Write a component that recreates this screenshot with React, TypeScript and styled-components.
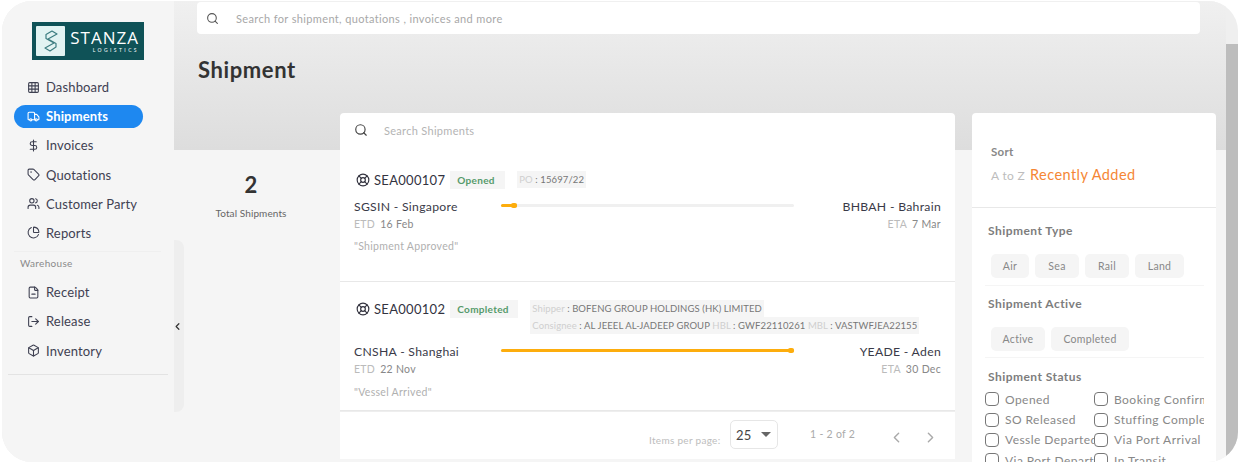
import React from "react";
import styled, { createGlobalStyle } from "styled-components";
import {
  Grid3x3, Truck, DollarSign, Tag, Users, PieChart, FileMinus, LogOut, Box,
  LifeBuoy, Search, ChevronLeft, ChevronRight,
} from "lucide-react";

const Global = createGlobalStyle`
  html, body { margin: 0; height: 462px; overflow: hidden; background: #fff; }
  body { font-family: "Lato", "Noto Sans", sans-serif; color: #3a3a48; letter-spacing: .3px; }
  * { box-sizing: border-box; }
`;

const Shell = styled.div`
  display: flex; position: relative; width: 1236px; height: 461px; margin: 1px 0 0 2px;
  border-radius: 30px; overflow: hidden; background: #efefef;
`;
const Sidebar = styled.aside`
  width: 172px; flex: none; background: #f5f5f5; display: flex; flex-direction: column; padding-top: 21px;
`;
const Logo = styled.div`
  width: 112px; height: 38px; margin-left: 30px; background: #0f5257; display: flex; align-items: center; padding-left: 4px; gap: 5px;
`;
const LogoMark = styled.div`
  width: 29px; height: 30px; flex: none; background: #e2f3f2; border-radius: 1px; display: flex; align-items: center; justify-content: center;
`;
const LogoText = styled.div`display: flex; flex-direction: column; align-items: flex-end; color: #fff; width: 69px;`;
const LogoName = styled.span`font-size: 17px; line-height: 18px; letter-spacing: 1px; font-family: "Open Sans", sans-serif;`;
const LogoSub = styled.span`font-size: 5px; line-height: 6px; letter-spacing: 2.4px;`;
const Nav = styled.nav`display: flex; flex-direction: column; margin-top: 12.5px;`;
const NavItem = styled.div<{ $active?: boolean }>`
  display: flex; align-items: center; gap: 6px; height: 23px; letter-spacing: .15px;
  margin: 3px 31px 3.2px 12px; padding-left: 13px; border-radius: 12px; font-size: 13px;
  background: ${p => (p.$active ? "#1e88f0" : "transparent")};
  color: ${p => (p.$active ? "#fff" : "#3f4152")};
  font-weight: ${p => (p.$active ? 700 : 400)};
  white-space: nowrap;
  svg { flex: none; }
`;
const FaintRule = styled.div`height: 1px; margin: 3px 13px 0 12px; background: #efefef;`;
const NavLabel = styled.div`font-size: 10px; color: #8a8a8a; margin: 5px 0 9px 18px; line-height: 12px;`;
const SideRule = styled.div`height: 1px; margin: 9px 6px 0; background: #e3e3e3;`;
const Collapse = styled.div`
  position: absolute; left: 172px; top: 239px; width: 10px; height: 172px; background: #eeeeee;
  border-radius: 0 8px 8px 0; display: flex; align-items: center;
  svg { margin-left: -2px; }
`;

const Main = styled.main`flex: 1; min-width: 0; background: #f5f5f5; display: flex; flex-direction: column; overflow: hidden;`;
const Banner = styled.header`
  height: 149px; flex: none; padding: 1px 0 0 23px; background: linear-gradient(180deg, #f0f0f0 0%, #dddddd 100%);
`;
const TopSearch = styled.div`
  width: 1003px; height: 32px; background: #fff; border-radius: 4px; display: flex; align-items: center; gap: 17px; padding-left: 9px;
  font-size: 11px; color: #a8a8a8; letter-spacing: .36px;
`;
const Title = styled.h1`margin: 21px 0 0 1px; font-size: 22px; line-height: 30px; font-weight: 700; color: #333; letter-spacing: .6px;`;
const Content = styled.div`display: flex; margin-top: -37px; gap: 17px; position: relative;`;
const Stats = styled.div`
  width: 149px; flex: none; margin-top: 37px; padding: 21px 0 0 5px; display: flex; flex-direction: column; align-items: center;
`;
const StatNum = styled.div`font-size: 22px; line-height: 28px; font-weight: 700; color: #333;`;
const StatLabel = styled.div`font-size: 10px; line-height: 12px; color: #666; margin-top: 8px; letter-spacing: .1px; white-space: nowrap;`;

const ListCol = styled.section`width: 615px; flex: none; display: flex; flex-direction: column;`;
const ListSearch = styled.div`
  height: 40px; padding: 0 0 6px 14px; background: #fff; border-radius: 4px 4px 0 0; display: flex; align-items: center; gap: 16px;
  font-size: 11px; color: #b4b4b4;
`;
const Card = styled.article<{ $h: number; $top: number }>`
  height: ${p => p.$h}px; padding: ${p => p.$top}px 14px 0; background: #fff; border-bottom: 1px solid #e8e8e8; display: flex; flex-direction: column;
`;
const Head = styled.div`display: flex; align-items: flex-start; height: 18px;`;
const Ref = styled.div`display: flex; align-items: center; gap: 4px; font-size: 13px; line-height: 18px; color: #33333f; margin-left: 2px;`;
const Badge = styled.span<{ $w: number }>`
  width: ${p => p.$w}px; height: 18px; line-height: 18px; margin-left: 5px; padding-left: 7px; flex: none; background: #f5f5f5;
  color: #559a6b; font-size: 10px; font-weight: 700;
`;
const Chip = styled.span`
  display: inline-block; height: 17px; line-height: 17px; padding: 0 2px; background: #f5f5f5; color: #777; font-size: 9.5px; white-space: nowrap; letter-spacing: .1px;
`;
const ChipStack = styled.div`display: flex; flex-direction: column; align-items: flex-start; margin-left: 12px;`;
const Dim = styled.span`color: #cfcfcf;`;
const Route = styled.div<{ $mt: number }>`display: grid; grid-template-columns: 147px 293px 1fr; align-items: start; margin-top: ${p => p.$mt}px;`;
const Port = styled.div<{ $end?: boolean }>`
  font-size: 12.2px; line-height: 16px; color: #3a3a48; text-align: ${p => (p.$end ? "right" : "left")};
`;
const Dates = styled.div<{ $end?: boolean }>`
  font-size: 10.5px; line-height: 14px; margin-top: 2px; color: #888; text-align: ${p => (p.$end ? "right" : "left")};
  span { color: #bbb; margin-right: 5px; }
`;
const Track = styled.div`height: 3px; background: #f0f0f0; margin-top: 5px; position: relative; border-radius: 2px;`;
const Fill = styled.div`height: 3px; background: #fdad0d; border-radius: 2px; position: relative;`;
const Dot = styled.div`position: absolute; right: 0; top: -1px; width: 6px; height: 5px; border-radius: 2px; background: #fdad0d;`;
const Note = styled.div<{ $mt: number }>`font-size: 10.5px; line-height: 14px; color: #b0b0b0; margin-top: ${p => p.$mt}px;`;
const Pager = styled.div`
  height: 48px; background: #fff; border-top: 1px solid #eee; display: flex; align-items: flex-start; padding-left: 309px;
`;
const PagerLabel = styled.span`font-size: 10px; color: #bdbdbd; margin-top: 22px; width: 81px; white-space: nowrap;`;
const Select = styled.div`
  width: 48px; height: 29px; margin-top: 8px; border: 1px solid #e6e6e6; border-radius: 5px; display: flex; align-items: center; padding-left: 5px; font-size: 13px; color: #444;
  i { width: 0; height: 0; margin-left: 9px; border: 5px solid transparent; border-top: 5px solid #666; border-bottom: 0; }
`;
const Range = styled.span`font-size: 10.5px; color: #aaa; margin: 16px 0 0 32px; width: 78px;`;
const PagerIcons = styled.div`display: flex; gap: 17px; margin-top: 17px; color: #aaa;`;

const Filters = styled.aside`width: 244px; height: 360px; flex: none; background: #fff; border-radius: 4px 4px 0 0; overflow: hidden;`;
const SortBox = styled.div`height: 95px; padding: 32px 0 0 19px; border-bottom: 1px solid #e8e8e8;`;
const SortLabel = styled.div`font-size: 11.5px; line-height: 14px; font-weight: 700; color: #888;`;
const SortRow = styled.div`display: flex; align-items: baseline; gap: 5px; margin-top: 7px;`;
const SortOff = styled.span`font-size: 12px; color: #bdbdbd;`;
const SortOn = styled.span`font-size: 14.5px; line-height: 18px; color: #f58634; letter-spacing: .45px;`;
const FilterGroup = styled.div<{ $h?: number; $pt: number }>`
  margin: 0 12px 0 13px; padding-top: ${p => p.$pt}px; ${p => (p.$h ? `height: ${p.$h}px; border-bottom: 1px solid #f5f5f5;` : "")}
`;
const GroupTitle = styled.div`font-size: 12px; line-height: 15px; font-weight: 700; color: #7d7d7d; letter-spacing: .45px; padding-left: 3px;`;
const Pills = styled.div`display: flex; gap: 6px; margin: 16px 0 0 6px;`;
const Pill = styled.span<{ $w: number }>`
  width: ${p => p.$w}px; height: 24px; line-height: 24px; text-align: center; background: #f5f5f5; border-radius: 5px; font-size: 10.5px; color: #888;
`;
const CheckGrid = styled.div`
  display: grid; grid-template-columns: 109px 110px; grid-auto-rows: 20.4px; margin-top: 5px; overflow: hidden; height: 78px; width: 219px;
`;
const CheckItem = styled.label`
  display: flex; align-items: center; font-size: 12px; color: #888; white-space: nowrap; overflow: hidden; letter-spacing: .45px;
`;
const Box14 = styled.span`
  width: 14px; height: 14px; flex: none; border: 1.3px solid #777; border-radius: 4px; margin-right: 6px; background: #fff;
`;
const ScrollRail = styled.div`width: 12px; flex: none; padding-top: 43px; display: flex;`;
const ScrollThumb = styled.div`flex: 1; background: #bdbdbd;`;

const nav = [
  { icon: Grid3x3, label: "Dashboard" },
  { icon: Truck, label: "Shipments", active: true },
  { icon: DollarSign, label: "Invoices" },
  { icon: Tag, label: "Quotations" },
  { icon: Users, label: "Customer Party" },
  { icon: PieChart, label: "Reports" },
];
const warehouse = [
  { icon: FileMinus, label: "Receipt" },
  { icon: LogOut, label: "Release" },
  { icon: Box, label: "Inventory" },
];
const statuses = ["Opened", "Booking Confirmed", "SO Released", "Stuffing Completed", "Vessle Departed", "Via Port Arrival", "Via Port Departed", "In Transit"];

export default function App() {
  return (
    <Shell>
      <Global />
      <Sidebar>
        <Logo>
          <LogoMark>
            <svg width="22" height="26" viewBox="0 0 22 26" fill="none" stroke="#3d7d80" strokeWidth="1.2" strokeLinejoin="round">
              <path d="M6 6.5 12 3 17 6 8 11 16 15.5V19L10 23 5 20 14 15 6 10.5Z" />
            </svg>
          </LogoMark>
          <LogoText>
            <LogoName>STANZA</LogoName>
            <LogoSub>LOGISTICS</LogoSub>
          </LogoText>
        </Logo>
        <Nav>
          {nav.map(({ icon: Icon, label, active }) => (
            <NavItem key={label} $active={active}>
              <Icon size={13} strokeWidth={2} />
              {label}
            </NavItem>
          ))}
          <FaintRule />
          <NavLabel>Warehouse</NavLabel>
          {warehouse.map(({ icon: Icon, label }) => (
            <NavItem key={label}>
              <Icon size={13} strokeWidth={2} />
              {label}
            </NavItem>
          ))}
          <SideRule />
        </Nav>
      </Sidebar>
      <Collapse><ChevronLeft size={11} strokeWidth={2.6} color="#333" /></Collapse>
      <Main>
        <Banner>
          <TopSearch><Search size={13} color="#555" />Search for shipment, quotations , invoices and more</TopSearch>
          <Title>Shipment</Title>
        </Banner>
        <Content>
          <Stats>
            <StatNum>2</StatNum>
            <StatLabel>Total Shipments</StatLabel>
          </Stats>
          <ListCol>
            <ListSearch><Search size={14} color="#444" />Search Shipments</ListSearch>
            <Card $h={129} $top={18}>
              <Head>
                <Ref><LifeBuoy size={14} strokeWidth={2} />SEA000107</Ref>
                <Badge $w={55}>Opened</Badge>
                <ChipStack><Chip><Dim>PO</Dim> : 15697/22</Chip></ChipStack>
              </Head>
              <Route $mt={10}>
                <div><Port>SGSIN - Singapore</Port><Dates><span>ETD</span>16 Feb</Dates></div>
                <Track><Fill style={{ width: "5.5%" }}><Dot /></Fill></Track>
                <div><Port $end>BHBAH - Bahrain</Port><Dates $end><span>ETA</span>7 Mar</Dates></div>
              </Route>
              <Note $mt={8}>"Shipment Approved"</Note>
            </Card>
            <Card $h={129} $top={18}>
              <Head>
                <Ref><LifeBuoy size={14} strokeWidth={2} />SEA000102</Ref>
                <Badge $w={68}>Completed</Badge>
                <ChipStack>
                  <Chip><Dim>Shipper</Dim> : BOFENG GROUP HOLDINGS (HK) LIMITED</Chip>
                  <Chip><Dim>Consignee</Dim> : AL JEEEL AL-JADEEP GROUP <Dim>HBL</Dim> : GWF22110261 <Dim>MBL</Dim> : VASTWFJEA22155</Chip>
                </ChipStack>
              </Head>
              <Route $mt={26}>
                <div><Port>CNSHA - Shanghai</Port><Dates><span>ETD</span>22 Nov</Dates></div>
                <Track><Fill style={{ width: "100%" }}><Dot /></Fill></Track>
                <div><Port $end>YEADE - Aden</Port><Dates $end><span>ETA</span>30 Dec</Dates></div>
              </Route>
              <Note $mt={9}>"Vessel Arrived"</Note>
            </Card>
            <Pager>
              <PagerLabel>Items per page:</PagerLabel>
              <Select>25<i /></Select>
              <Range>1 - 2 of 2</Range>
              <PagerIcons><ChevronLeft size={17} /><ChevronRight size={17} /></PagerIcons>
            </Pager>
          </ListCol>
          <Filters>
            <SortBox>
              <SortLabel>Sort</SortLabel>
              <SortRow><SortOff>A to Z</SortOff><SortOn>Recently Added</SortOn></SortRow>
            </SortBox>
            <FilterGroup $h={78} $pt={15}>
              <GroupTitle>Shipment Type</GroupTitle>
              <Pills>
                <Pill $w={38}>Air</Pill><Pill $w={44}>Sea</Pill><Pill $w={44}>Rail</Pill><Pill $w={49}>Land</Pill>
              </Pills>
            </FilterGroup>
            <FilterGroup $h={72} $pt={10}>
              <GroupTitle>Shipment Active</GroupTitle>
              <Pills>
                <Pill $w={54}>Active</Pill><Pill $w={78}>Completed</Pill>
              </Pills>
            </FilterGroup>
            <FilterGroup $pt={11}>
              <GroupTitle>Shipment Status</GroupTitle>
              <CheckGrid>
                {statuses.map(s => <CheckItem key={s}><Box14 />{s}</CheckItem>)}
              </CheckGrid>
            </FilterGroup>
          </Filters>
        </Content>
      </Main>
      <ScrollRail><ScrollThumb /></ScrollRail>
    </Shell>
  );
}
